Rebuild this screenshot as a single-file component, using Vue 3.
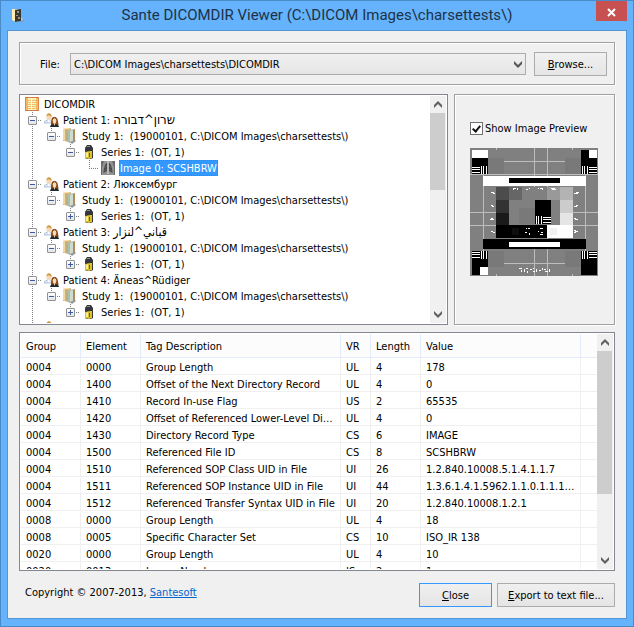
<script setup>
import { ref, computed } from 'vue'

const STUDY = 'Study 1:  (19000101, C:\\DICOM Images\\charsettests\\)'
const SERIES = 'Series 1:  (OT, 1)'

const patients = [
  { name: 'שרון^דבורה', script: 'hebrew', open: true },
  { name: 'Люксембург', open: false },
  { name: 'قباني^لنزار', script: 'arabic', open: false },
  { name: 'Äneas^Rüdiger', open: false },
  { name: 'Buc^Jérôme', open: false },
]

const rows = computed(() => {
  const list = [{ level: 0, icon: 'root', text: 'DICOMDIR' }]
  patients.forEach((p, i) => {
    list.push({ level: 1, icon: 'patient', text: `Patient ${i + 1}: `, name: p.name, script: p.script, toggle: 'minus' })
    if (i === patients.length - 1) return
    list.push({ level: 2, icon: 'study', text: STUDY, toggle: 'minus' })
    list.push({ level: 3, icon: 'series', text: SERIES, toggle: p.open ? 'minus' : 'plus' })
    if (p.open) list.push({ level: 4, icon: 'image', text: 'Image 0: SCSHBRW', selected: true })
  })
  return list
})

const tags = [
  ['0004', '0000', 'Group Length', 'UL', '4', '178'],
  ['0004', '1400', 'Offset of the Next Directory Record', 'UL', '4', '0'],
  ['0004', '1410', 'Record In-use Flag', 'US', '2', '65535'],
  ['0004', '1420', 'Offset of Referenced Lower-Level Directory Entity', 'UL', '4', '0'],
  ['0004', '1430', 'Directory Record Type', 'CS', '6', 'IMAGE'],
  ['0004', '1500', 'Referenced File ID', 'CS', '8', 'SCSHBRW'],
  ['0004', '1510', 'Referenced SOP Class UID in File', 'UI', '26', '1.2.840.10008.5.1.4.1.1.7'],
  ['0004', '1511', 'Referenced SOP Instance UID in File', 'UI', '44', '1.3.6.1.4.1.5962.1.1.0.1.1.1175775772.5715.0'],
  ['0004', '1512', 'Referenced Transfer Syntax UID in File', 'UI', '20', '1.2.840.10008.1.2.1'],
  ['0008', '0000', 'Group Length', 'UL', '4', '18'],
  ['0008', '0005', 'Specific Character Set', 'CS', '10', 'ISO_IR 138'],
  ['0020', '0000', 'Group Length', 'UL', '4', '10'],
  ['0020', '0013', 'Image Number', 'IS', '2', '1'],
]

const headers = ['Group', 'Element', 'Tag Description', 'VR', 'Length', 'Value']
const showPreview = ref(true)
</script>

<template>
  <div class="window">
    <header class="titlebar">
      <svg class="app-icon" viewBox="0 0 16 16" aria-hidden="true">
        <path d="M1 1h5v13l-5-1z" fill="#e8cf84" />
        <path d="M0 1h3v12l-3-1z" fill="#fbedb4" />
        <path d="M3 2l6-1v12l-6 1z" fill="#3b372e" />
        <path d="M5 3h2v2H5zM4 7h2v1H4zM6 9h2v2H6z" fill="#9b968a" />
        <path d="M9 9l2 2v3l-2-1z" fill="#b8c8d2" />
        <path d="M8 13l4-1-1 2z" fill="#6f93b4" />
      </svg>
      <h1>Sante DICOMDIR Viewer (C:\DICOM Images\charsettests\)</h1>
      <button class="close-x" aria-label="Close window">
        <svg viewBox="0 0 9 9"><path d="M1 1l7 7M8 1L1 8" stroke="#fff" stroke-width="2" /></svg>
      </button>
    </header>

    <main class="client">
      <section class="group file-row">
        <label for="file">File:</label>
        <div class="combo">
          <select id="file"><option>C:\DICOM Images\charsettests\DICOMDIR</option></select>
          <svg viewBox="0 0 8 7"><path d="M0 0l4 4 4-4v3L4 7 0 3z" fill="#555" /></svg>
        </div>
        <button class="btn browse"><u>B</u>rowse...</button>
      </section>

      <section class="upper">
        <div class="pane tree-pane">
          <ul class="tree">
            <li v-for="(r, i) in rows" :key="i" class="node">
              <span
                v-for="n in r.level"
                :key="n"
                class="cell"
                :class="{ trunk: n === 1, elbow: n === r.level, down: n === r.level && n > 1 }"
              >
                <button
                  v-if="n === r.level && r.toggle"
                  class="toggle"
                  :class="r.toggle"
                  :aria-label="r.toggle === 'plus' ? 'Expand' : 'Collapse'"
                ></button>
              </span>
              <svg v-if="r.icon === 'root'" class="icon" viewBox="0 0 16 16">
                <path d="M0 1h14v14H0z" fill="#e08a4a" />
                <path d="M1 2h12v12H1z" fill="#f3b765" />
                <path d="M3 2h8v12H3z" fill="#fff2b8" />
                <path d="M3 4.500h8M3 6.500h8M3 8.500h8M3 10.500h8M3 12.500h8" stroke="#eebf6c" />
                <path d="M6.500 2v12" stroke="#fffbe2" />
                <path d="M0 1h14v1H0zM0 14h14v1H0z" fill="#cf7a45" />
              </svg>
              <svg v-else-if="r.icon === 'patient'" class="icon" viewBox="0 0 16 16">
                <path d="M0 11c0-2 2-3 5-3 2 0 3 1 4 3z" fill="#dfeaf5" stroke="#8ba0b8" stroke-width=".6" />
                <circle cx="5" cy="5" r="2.600" fill="#f7d5ae" />
                <path d="M2.500 4.500C2 .5 7.500 0 7.800 4.500 6.500 4.500 5.500 3 4 3.200z" fill="#d09a45" />
                <path d="M3.500 8l1.500 3 1-3z" fill="#fff" />
                <path d="M7 13c0-7 1-8 3.500-8S14 7 14.500 13z" fill="#8a4a1c" />
                <ellipse cx="10.500" cy="8.800" rx="1.900" ry="2.500" fill="#f9dab8" />
                <path d="M6 15c0-2 2-3 4.500-3S15 13 15 15z" fill="#222a30" />
                <path d="M9.500 11h2l-1 3z" fill="#f6d0ab" />
              </svg>
              <svg v-else-if="r.icon === 'study'" class="icon" viewBox="0 0 16 16">
                <path d="M0 1l8-1v12l-8 1z" fill="#e3bf82" />
                <path d="M0 1l2-1v12l-2 0z" fill="#f1d9a4" />
                <path d="M2 1l6 1v13l-6-2z" fill="#d3ad72" />
                <path d="M3 3l4 1v9l-4-1z" fill="#bcae80" />
                <path d="M5 2l7-1v12l-5 2-2-1z" fill="#a9bfae" />
                <path d="M7 3l4-1v10l-4 2z" fill="#cfdad2" />
                <path d="M12 1v12l-2 1V2z" fill="#b48d55" />
                <path d="M7 14l5-2 1 1-4 3z" fill="#9a9a96" />
              </svg>
              <svg v-else-if="r.icon === 'series'" class="icon" viewBox="0 0 16 16">
                <path d="M3 4l2-3h4l2 3v3H3z" fill="#34363a" />
                <path d="M5 2h3v1H5z" fill="#8b8f94" />
                <path d="M3 6h8v8l-2 1H5l-2-1z" fill="#34363a" />
                <path d="M3 8l5-1h2v7l-3 1-4-1z" fill="#dcc02c" />
                <path d="M4 9l2-1v5l-2 0z" fill="#f9ec8a" />
                <path d="M7 9h1v4H7z" fill="#65561a" />
              </svg>
              <svg v-else class="icon" viewBox="0 0 16 16">
                <path d="M0 1h14v14H0z" fill="#929292" />
                <path d="M0 1h3l-2 6v8H0zM14 1h-3l2 6v8h1z" fill="#6a6a6a" />
                <path d="M5.500 3C3.500 5 2.500 9 2.500 13l3.500-2V3zM8.500 3C10.500 5 11.500 9 11.500 13L8 11V3z" fill="#484848" />
                <path d="M6 1h2v13H6z" fill="#b5b5b5" />
                <path d="M3 8l3-2M3 11l3-2M8 6l3 2M8 9l3 2" stroke="#6f6f6f" stroke-width=".7" />
              </svg>
              <span class="label" :class="{ selected: r.selected }">{{ r.text }}<bdi v-if="r.name" :class="r.script">{{ r.name }}</bdi></span>
            </li>
          </ul>
          <div class="scroll">
            <button class="arrow" aria-label="Scroll tree up"><svg viewBox="0 0 8 7"><path d="M0 7V4l4-4 4 4v3L4 3z" /></svg></button>
            <div class="track"><div class="thumb tree-thumb"></div></div>
            <button class="arrow" aria-label="Scroll tree down"><svg viewBox="0 0 8 7"><path d="M0 0l4 4 4-4v3L4 7 0 3z" /></svg></button>
          </div>
        </div>

        <div class="group preview">
          <label class="check">
            <input v-model="showPreview" type="checkbox" />
            <span>Show Image Preview</span>
          </label>
          <svg v-if="showPreview" class="pattern" viewBox="0 0 128 128" shape-rendering="crispEdges" role="img" aria-label="Test pattern">
            <defs>
              <g id="hs"><path d="M0 0h8v8H0z" fill="#000" /><path d="M0 1h8v1H0zM0 3h8v1H0zM0 6h8v1H0z" fill="#fff" /></g>
              <g id="vs"><path d="M0 0h8v8H0z" fill="#000" /><path d="M1 0h1v8H1zM3 0h1v8H3zM6 0h1v8H6z" fill="#fff" /></g>
            </defs>
            <path d="M0 0h128v128H0z" fill="#808080" />
            <path
              d="M34 13h61v1H34zM0 26h128v1H0zM0 64h128v1H0zM0 77h128v1H0zM34 115h61v1H34zM13 26h1v77h-1zM64 0h1v128h-1zM77 0h1v128h-1zM115 26h1v77h-1zM26 0h1v2h-1zM102 0h1v2h-1zM26 126h1v2h-1zM102 126h1v2h-1z"
              fill="#bdbdbd"
            />
            <path d="M18 10h16v16H18zM95 10h16v16H95zM18 103h16v16H18zM95 103h16v16H95z" fill="#797979" />
            <path d="M2 2h16v8H2z" fill="#fff" />
            <path d="M2 10h16v8H2zM111 2h16v16h-16zM2 111h16v16H2zM111 111h16v16h-16z" fill="#000" />
            <path d="M119 2h8v8h-8zM10 119h8v8h-8z" fill="#fff" />
            <use href="#hs" x="2" y="18" /><use href="#vs" x="10" y="18" />
            <use href="#vs" x="111" y="18" /><use href="#hs" x="119" y="18" />
            <use href="#hs" x="2" y="103" /><use href="#vs" x="10" y="103" />
            <use href="#vs" x="111" y="103" /><use href="#hs" x="119" y="103" />
            <path d="M13 28h103v10H13z" fill="#fff" /><path d="M39 30h51v5H39z" fill="#000" />
            <path d="M26 39h77v51H26z" fill="#808080" />
            <path d="M26 39h13v13H26z" fill="#4c4c4c" /><path d="M39 39h13v13H39z" fill="#666" />
            <path d="M77 39h13v13H77z" fill="#999" /><path d="M90 39h13v13H90z" fill="#b3b3b3" />
            <path d="M26 52h13v13H26z" fill="#333" /><path d="M90 52h13v13H90z" fill="#ccc" />
            <path d="M26 65h13v12H26z" fill="#1a1a1a" /><path d="M90 65h13v12H90z" fill="#e5e5e5" />
            <path d="M49 60h16v16H49z" fill="#797979" />
            <path d="M65 52h16v16H65zM26 77h51v13H26z" fill="#000" />
            <use href="#vs" x="65" y="68" /><use href="#hs" x="73" y="68" />
            <path d="M77 77h26v13H77z" fill="#fff" />
            <path d="M42 80h7v7h-7z" fill="#0d0d0d" /><path d="M80 80h7v7h-7z" fill="#f2f2f2" />
            <path d="M13 91h103v10H13z" fill="#000" /><path d="M39 94h51v5H39z" fill="#fff" />
            <path
              d="M21 44h3v1h-3zM23 45h2v1h-2zM21 57h2v1h-2zM22 58h2v1h-2zM20 71h4v1h-4zM21 70h2v1h-2zM21 83h2v1h-2zM23 84h2v1h-2zM104 45h4v1h-4zM106 44h3v1h-3zM104 58h3v1h-3zM106 57h2v1h-2zM105 71h3v1h-3zM104 70h2v1h-2zM104 82h2v1h-2zM105 83h3v1h-3zM104 84h2v1h-2zM43 40h3v1h-3zM43 41h1v1h-1zM47 40h1v2h-1zM56 41h2v1h-2zM59 40h1v1h-1zM68 40h1v1h-1zM70 40h3v1h-3zM72 41h1v1h-1zM81 40h4v1h-4zM82 41h4v1h-4zM56 80h1v1h-1zM58 80h2v1h-2zM55 84h2v1h-2zM59 85h1v2h-1zM70 80h3v1h-3zM68 83h1v1h-1zM71 84h2v1h-2zM70 86h3v1h-3zM49 120h3v1h-3zM51 122h1v2h-1zM54 121h1v3h-1zM56 120h2v1h-2zM57 123h1v2h-1zM60 121h2v1h-2zM63 120h1v1h-1zM63 123h2v1h-2zM66 121h1v3h-1zM69 122h2v1h-2zM72 120h1v2h-1zM74 121h2v1h-2zM75 123h3v1h-3zM79 121h1v3h-1z"
              fill="#fff"
            />
          </svg>
        </div>
      </section>

      <section class="pane tag-pane">
        <div class="table-view">
          <table>
            <colgroup>
              <col class="c60" /><col class="c60" /><col class="c200" /><col class="c30" /><col class="c50" /><col class="c160" /><col />
            </colgroup>
            <thead>
              <tr><th v-for="h in headers" :key="h">{{ h }}</th><td></td></tr>
            </thead>
            <tbody>
              <tr v-for="(t, i) in tags" :key="i"><td v-for="(c, j) in t" :key="j">{{ c }}</td><td></td></tr>
            </tbody>
          </table>
        </div>
        <div class="scroll">
          <button class="arrow" aria-label="Scroll tags up"><svg viewBox="0 0 8 7"><path d="M0 7V4l4-4 4 4v3L4 3z" /></svg></button>
          <div class="track"><div class="thumb tag-thumb"></div></div>
          <button class="arrow" aria-label="Scroll tags down"><svg viewBox="0 0 8 7"><path d="M0 0l4 4 4-4v3L4 7 0 3z" /></svg></button>
        </div>
      </section>

      <footer class="bottom">
        <p>Copyright © 2007-2013, <a href="#">Santesoft</a></p>
        <button class="btn primary"><u>C</u>lose</button>
        <button class="btn export"><u>E</u>xport to text file...</button>
      </footer>
    </main>
  </div>
</template>

<style>
body { margin: 0; }
</style>

<style scoped>
* { box-sizing: border-box; }
.window {
  display: flex;
  flex-direction: column;
  height: 100vh;
  padding: 0 7px 7px;
  border: 1px solid #4a8ac6;
  background: #66b3fd;
  font: 11px/16px "DejaVu Sans Condensed", "Noto Sans", "DejaVu Sans", sans-serif;
  color: #000;
}
button, select, input { font: inherit; color: inherit; margin: 0; }
.titlebar {
  display: flex;
  flex: none;
  align-items: flex-start;
  height: 29px;
  margin-right: -1px;
  padding-left: 4px;
}
.app-icon { width: 16px; height: 16px; margin-top: 7px; }
h1 {
  flex: 1;
  margin: 0;
  padding-left: 10px;
  font: 400 15px/29px Roboto, "Open Sans", sans-serif;
  text-align: center;
  color: #1c3247;
}
.close-x {
  display: grid;
  place-items: center;
  width: 31px;
  height: 20px;
  padding: 2px 0 0;
  border: 0;
  background: #c75050;
}
.close-x svg { width: 9px; height: 9px; }
.client {
  display: flex;
  flex: 1;
  flex-direction: column;
  min-height: 0;
  margin: 0 -1px;
  padding: 11px;
  border: 1px solid #5296d6;
  background: #f0f0f0;
}
.group { border: 1px solid #a0a0a0; box-shadow: 1px 1px #fff, inset 1px 1px #fff; }
.file-row {
  display: flex;
  flex: none;
  align-items: center;
  gap: 8px;
  height: 43px;
  padding: 0 7px 0 20px;
}
.file-row label { width: 22px; padding-top: 2px; }
.combo { position: relative; flex: 1; display: flex; }
.combo select {
  appearance: none;
  width: 100%;
  height: 22px;
  padding: 3px 20px 0 3px;
  border: 1px solid #acacac;
  border-radius: 0;
  background: linear-gradient(#f0f0f0, #e6e6e6);
}
.combo svg { position: absolute; right: 4px; top: 8px; width: 8px; height: 7px; pointer-events: none; }
.btn {
  height: 24px;
  padding: 2px 0 0;
  border: 1px solid #acacac;
  background: linear-gradient(#f0f0f0, #e5e5e5);
}
.browse { width: 73px; }
.upper {
  display: flex;
  flex: 231 1 0;
  gap: 6px;
  min-height: 0;
  margin-top: 9px;
}
.pane { display: flex; border: 1px solid #828790; background: #fff; overflow: hidden; }
.tree-pane { flex: 1; min-width: 0; padding: 1px; }
.tree { flex: 1; min-width: 0; margin: 0; padding: 0 0 0 2px; list-style: none; overflow: hidden; }
.node { display: flex; height: 16px; white-space: pre; }
.cell { display: grid; flex: none; place-items: center; width: 19px; height: 16px; background-repeat: no-repeat; }
.cell.trunk {
  background-image: repeating-linear-gradient(#808080 0 1px, transparent 1px 2px);
  background-size: 1px 16px;
  background-position: 9px 0;
}
.cell.elbow {
  background-image:
    repeating-linear-gradient(90deg, #808080 0 1px, transparent 1px 2px),
    repeating-linear-gradient(#808080 0 1px, transparent 1px 2px);
  background-size: 10px 1px, 1px 16px;
  background-position: 9px 8px, 9px 0;
}
.cell.down { background-size: 10px 1px, 1px 8px; }
.toggle {
  width: 9px;
  height: 9px;
  padding: 0;
  border: 1px solid #919191;
  border-radius: 1px;
  background: linear-gradient(#3c5aa5, #3c5aa5) center / 5px 1px no-repeat, linear-gradient(#fff, #e4e4e4);
}
.toggle.plus {
  background:
    linear-gradient(#3c5aa5, #3c5aa5) center / 5px 1px no-repeat,
    linear-gradient(#3c5aa5, #3c5aa5) center / 1px 5px no-repeat,
    linear-gradient(#fff, #e4e4e4);
}
.icon { flex: none; width: 16px; height: 16px; margin-left: 2px; }
.label { flex: none; height: 16px; margin-left: 2px; padding: 2px 1px 0; line-height: 14px; }
.label.selected { background: #3399ff; color: #fff; outline: 1px dotted #cc6600; outline-offset: -1px; }
.hebrew, .arabic { line-height: 0; }
.hebrew { font-size: 13px; }
.arabic { font-size: 12px; }
.scroll { display: flex; flex: none; flex-direction: column; width: 16px; padding-right: 1px; background: #f0f0f0; }
.arrow { display: grid; flex: none; place-items: center; height: 17px; padding: 0; border: 0; background: #f0f0f0; }
.arrow svg { width: 8px; height: 7px; fill: #606060; }
.track { flex: 1; }
.thumb { background: #cdcdcd; }
.tree-thumb { height: 40%; }
.tag-thumb { height: 71%; }
.preview { display: flex; flex-direction: column; width: 161px; padding: 25px 15px 0; }
.check { display: flex; align-items: center; gap: 2px; white-space: nowrap; }
.check span { padding-top: 1px; }
.check input {
  appearance: none;
  display: grid;
  flex: none;
  place-items: center;
  width: 13px;
  height: 13px;
  border: 1px solid #707070;
  background: #fff;
}
.check input:checked::before {
  content: "";
  width: 3px;
  height: 6px;
  margin-bottom: 2px;
  border: solid #111;
  border-width: 0 2px 2px 0;
  transform: rotate(40deg);
}
.pattern { width: 128px; height: 128px; margin-top: 11px; }
.tag-pane { flex: 235 1 0; min-height: 0; margin-top: 7px; padding: 1px; }
.table-view { flex: 1; min-width: 0; overflow: hidden; }
table { width: 100%; table-layout: fixed; border-collapse: separate; border-spacing: 0; line-height: 14px; }
.c60 { width: 60px; }
.c200 { width: 200px; }
.c30 { width: 30px; }
.c50 { width: 50px; }
.c160 { width: 160px; }
th, td {
  height: 17px;
  padding: 2px 5px 0;
  border: solid #f0f0f0;
  border-width: 0 1px 1px 0;
  font-weight: 400;
  text-align: left;
  white-space: nowrap;
  overflow: hidden;
  text-overflow: ellipsis;
}
th, thead td { height: 24px; border-color: #e2ecfb; background: #fcfcfc; }
tbody td { padding-top: 4px; line-height: 12px; }
td + td { padding-right: 4px; }
td:last-child { border-right: 0; }
.bottom { display: flex; flex: none; align-items: center; gap: 5px; padding-top: 12px; }
.bottom p { flex: 1; margin: 0; padding: 0 0 4px 6px; white-space: pre; }
.bottom a { color: #0066cc; }
.primary { width: 73px; border-color: #3399ff; }
.export { width: 118px; }
</style>
